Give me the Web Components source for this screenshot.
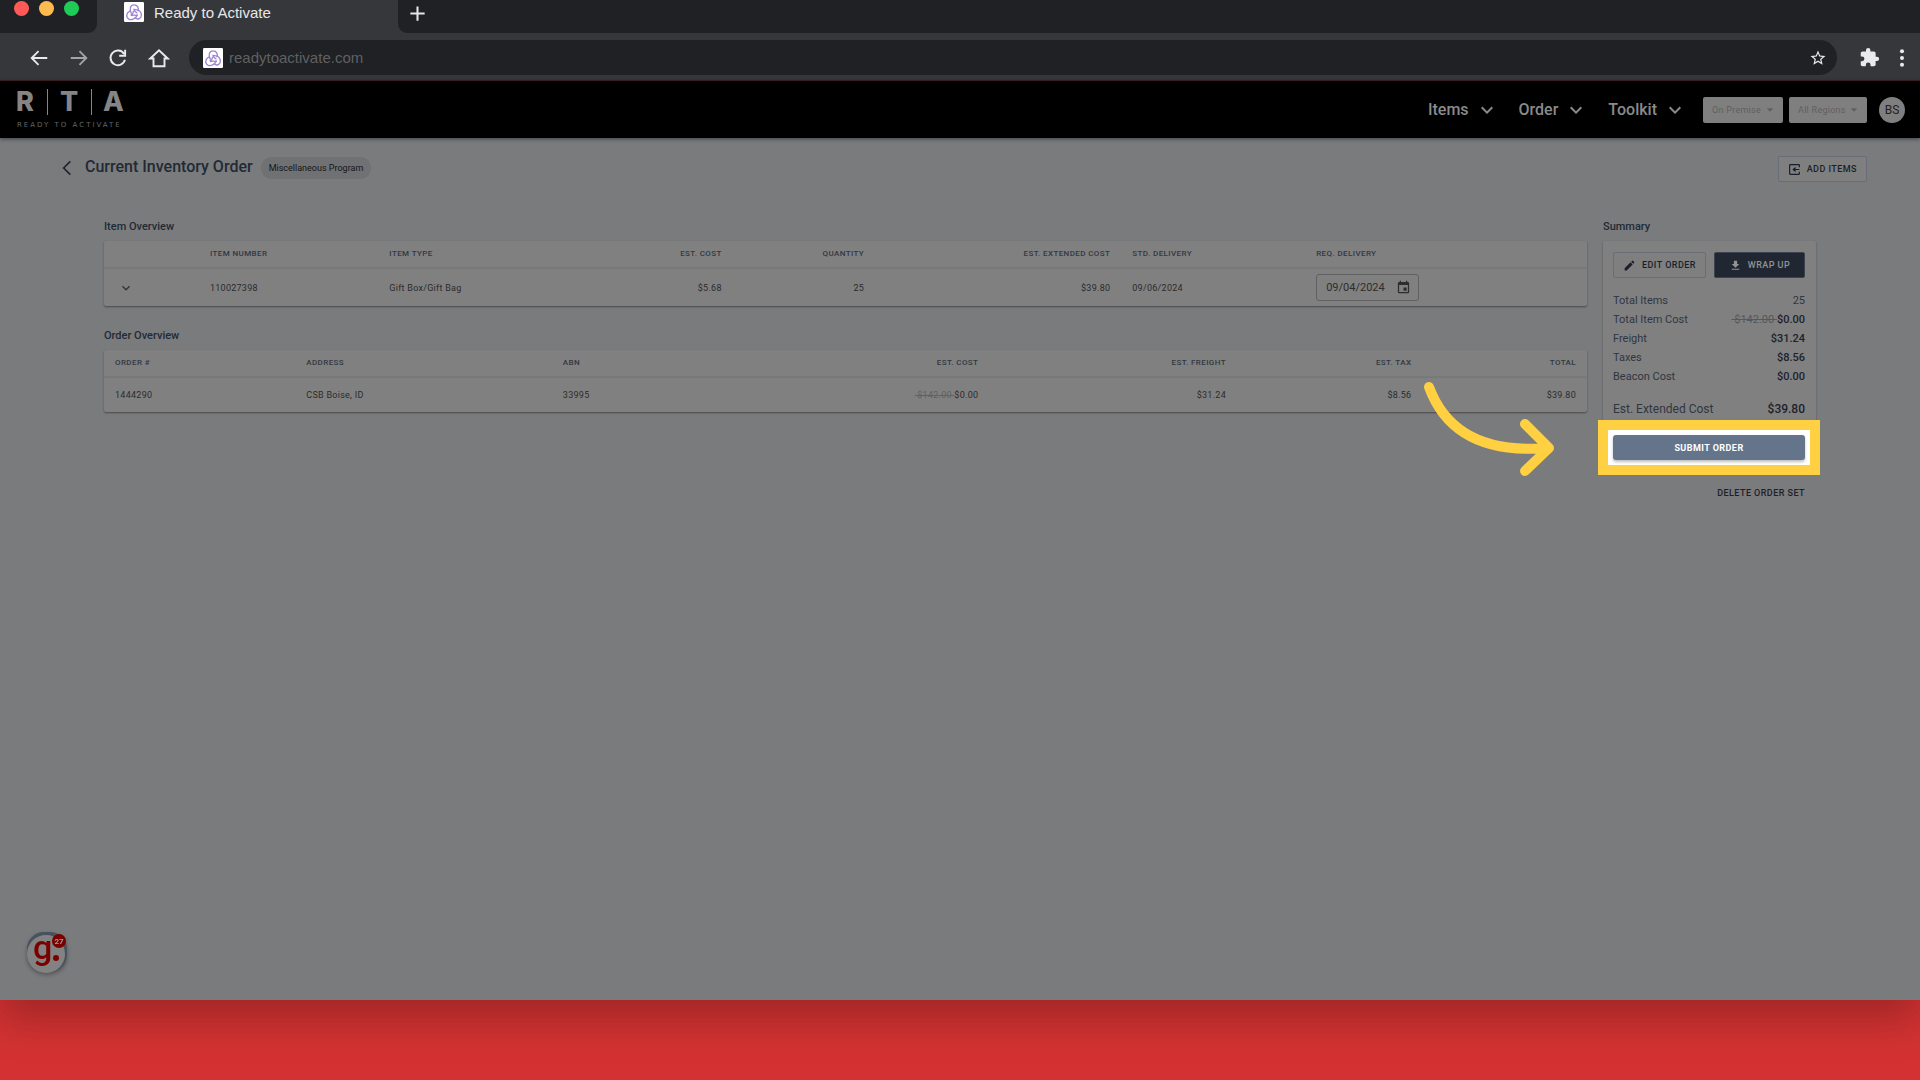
<!DOCTYPE html>
<html lang="en">
<head>
<meta charset="utf-8">
<title>Ready to Activate</title>
<style>
  body { margin: 0; min-height: 100vh; background: #d43232; font-family: Roboto, "Liberation Sans", sans-serif; }
</style>
</head>
<body>
<app-window>
  <tab-strip slot="chrome" label="Ready to Activate"></tab-strip>
  <address-bar slot="chrome" url="readytoactivate.com"></address-bar>
  <site-header>
    <nav-item>Items</nav-item>
    <nav-item>Order</nav-item>
    <nav-item>Toolkit</nav-item>
    <filter-select slot="filters" label="Premise" value="On Premise"></filter-select>
    <filter-select slot="filters" label="Region" value="All Regions"></filter-select>
  </site-header>
  <page-title badge="Miscellaneous Program">Current Inventory Order</page-title>
  <order-layout>
    <data-table source="items"></data-table>
    <data-table source="orders"></data-table>
    <order-summary slot="aside"></order-summary>
  </order-layout>
  <help-bubble></help-bubble>
</app-window>

<script>
const ICONS = {
  back: '<path d="M21 12H4M11.500 4.500 4 12l7.500 7.500" fill="none" stroke="currentColor" stroke-width="2"/>',
  forward: '<path d="M3 12h17M12.500 4.500 20 12l-7.500 7.500" fill="none" stroke="currentColor" stroke-width="2"/>',
  reload: '<path d="M17.500 7.500A8 8 0 1 0 18.500 14M18.700 3v6.500h-6.500" fill="none" stroke="currentColor" stroke-width="2.100"/>',
  home: '<path d="M2.500 12.500 12 3.500l9.500 9h-3.500v8.500h-12v-8.500z" fill="none" stroke="currentColor" stroke-width="2.100"/>',
  star: '<path d="M22 9.240l-7.190-.62L12 2 9.190 8.630 2 9.240l5.460 4.730L5.820 21 12 17.270 18.180 21l-1.630-7.030L22 9.240zM12 15.400l-3.760 2.270 1-4.280-3.320-2.880 4.380-.38L12 6.100l1.710 4.040 4.380.38-3.320 2.880 1 4.280L12 15.400z"/>',
  puzzle: '<path d="M20.500 11H19V7c0-1.100-.9-2-2-2h-4V3.500a2.500 2.500 0 0 0-5 0V5H4c-1.100 0-2 .9-2 2v3.800h1.500a2.700 2.700 0 0 1 0 5.400H2V20c0 1.100.9 2 2 2h3.800v-1.500a2.700 2.700 0 0 1 5.400 0V22H17c1.100 0 2-.9 2-2v-4h1.500a2.500 2.500 0 0 0 0-5z"/>',
  dots: '<circle cx="12" cy="3" r="2.700"/><circle cx="12" cy="12" r="2.700"/><circle cx="12" cy="21" r="2.700"/>',
  plus: '<path d="M12 3v18M3 12h18" stroke="currentColor" stroke-width="2.600"/>',
  down: '<path d="M7.410 8.590 12 13.170l4.590-4.580L18 10l-6 6-6-6z"/>',
  caret: '<path d="M4 8l8 8 8-8z"/>',
  left: '<path d="M17 2 7 12l10 10" fill="none" stroke="currentColor" stroke-width="2.600"/>',
  add: '<path d="M21 8V4a1 1 0 0 0-1-1H4a1 1 0 0 0-1 1v16a1 1 0 0 0 1 1h16a1 1 0 0 0 1-1v-4" fill="none" stroke="currentColor" stroke-width="2.200"/><path d="M21 11h-7V7l-6 5 6 5v-4h7z"/>',
  pencil: '<path d="M3 17.250V21h3.750L17.810 9.940l-3.750-3.750L3 17.250zM20.710 7.040a1 1 0 0 0 0-1.410l-2.340-2.340a1 1 0 0 0-1.410 0l-1.830 1.830 3.750 3.750 1.830-1.830z"/>',
  download: '<path d="M19 9h-4V3H9v6H5l7 7 7-7zM5 18v2h14v-2H5z"/>',
  calendar: '<path d="M17 12h-5v5h5v-5zM16 1v2H8V1H6v2H5a2 2 0 0 0-2 2v14a2 2 0 0 0 2 2h14a2 2 0 0 0 2-2V5a2 2 0 0 0-2-2h-1V1h-2zm3 18H5V8h14v11z"/>',
  redux: '<rect width="24" height="24" rx="1.500" fill="#fff"/><g fill="none" stroke="#a084d4" stroke-width="1.600" stroke-linecap="round"><path d="M8.800 13.500C6 9 7.500 3.500 12 3.500s6 4 4.700 7"/><path d="M12.500 9.200c5-.8 8.800 3 8.300 7.300-.4 3.800-4.800 5-7.600 2.500"/><path d="M15.800 15.500c-1.500 4.500-6.300 6.800-10 5-3.800-2-3-7.500.7-9.300"/><path d="M12 8.500c.5 2 1.500 3.500 3.500 4.500M9 16.200c2-.6 4.500-.6 6.800 0M8.500 15.500c1.800-1 2.800-2.800 3-4.500"/></g>'
};

const s = (text, strike) => strike ? `<s>&nbsp;${strike}&nbsp;</s>${text}` : text;
const DATA = {
  items: {
    title: 'Item Overview',
    cols: [
      { head: '', width: 6.4, cell: '<button class="exp" aria-label="Expand row"><ui-icon name="down" size="16"></ui-icon></button>' },
      { head: 'ITEM NUMBER', width: 12.1, cell: '110027398' },
      { head: 'ITEM TYPE', width: 14.3, cell: 'Gift Box/Gift Bag' },
      { head: 'EST. COST', width: 9.6, num: 1, cell: '$5.68' },
      { head: 'QUANTITY', width: 9.6, num: 1, cell: '25' },
      { head: 'EST. EXTENDED COST', width: 16.6, num: 1, cell: '$39.80' },
      { head: 'STD. DELIVERY', width: 12.4, cell: '09/06/2024' },
      { head: 'REQ. DELIVERY', width: 19, cell: '<date-field value="09/04/2024"></date-field>' }
    ]
  },
  orders: {
    title: 'Order Overview',
    cols: [
      { head: 'ORDER #', width: 12.9, cell: '1444290' },
      { head: 'ADDRESS', width: 17.3, cell: 'CSB Boise, ID' },
      { head: 'ABN', width: 12.3, cell: '33995' },
      { head: 'EST. COST', width: 17.2, num: 1, cell: s('$0.00', '$142.00') },
      { head: 'EST. FREIGHT', width: 16.7, num: 1, cell: '$31.24' },
      { head: 'EST. TAX', width: 12.5, num: 1, cell: '$8.56' },
      { head: 'TOTAL', width: 11.1, num: 1, cell: '$39.80' }
    ]
  }
};

const base = '*,:host{box-sizing:border-box}button,input,select{font:inherit;color:inherit;margin:0}button{border:0;background:none;padding:0;display:flex;align-items:center;justify-content:center}';
function define(name, render) {
  customElements.define(name, class extends HTMLElement {
    connectedCallback() {
      if (this.shadowRoot) return;
      const t = document.createElement('template');
      t.innerHTML = render(this);
      this.attachShadow({ mode: 'open' }).append(t.content.cloneNode(true));
    }
  });
}

define('ui-icon', el => `<style>:host{display:block;flex:none;width:${el.getAttribute('size')}px;height:${el.getAttribute('size')}px}svg{display:block;width:100%;height:100%}</style>
<svg viewBox="0 0 24 24" fill="currentColor" aria-hidden="true">${ICONS[el.getAttribute('name')]}</svg>`);

define('app-window', () => `<style>${base}
:host{display:flex;flex-direction:column;position:relative;min-height:calc(100vh - 80px);background:#7a7b7d;box-shadow:0 18px 40px rgba(0,0,0,.25)}
</style><slot name="chrome"></slot><slot></slot>`);

define('tab-strip', el => `<style>${base}
:host{display:flex;height:33px;background:#36373b;font:15px/20px "Liberation Sans",sans-serif;color:#e6e7e9}
.lights{width:97px;background:#202124;border-radius:0 0 9px 0;display:flex;gap:10px;padding:1px 0 0 14px}
.lights i{width:15px;height:15px;border-radius:50%}
.tab{width:301px;display:flex;align-items:flex-start;gap:10px;padding:2px 0 0 27px}
.tab span{padding-top:1px}
.rest{flex:1;background:#202124;border-radius:0 0 0 9px;padding:4px 0 0 10px}
</style>
<div class="lights"><i style="background:#ff5a57"></i><i style="background:#ffbb4e"></i><i style="background:#1fcb57"></i></div>
<div class="tab"><ui-icon name="redux" size="20"></ui-icon><span>${el.getAttribute('label')}</span></div>
<div class="rest"><button aria-label="New tab"><ui-icon name="plus" size="19"></ui-icon></button></div>`);

define('address-bar', el => `<style>${base}
:host{display:flex;align-items:center;height:48px;background:#36373b;border-bottom:1px solid #3f2226;padding:2px 9px 0 28px;color:#e8eaed;font:15px/20px "Liberation Sans",sans-serif}
.nav{display:flex;gap:18px;margin-right:19px}
.dim{color:#a3a4a7}
.omni{flex:1;display:flex;align-items:center;gap:6px;height:35px;border-radius:18px;background:#202124;padding:0 10px 0 14px}
input{flex:1;min-width:0;border:0;padding:0;background:none;color:#5f6063;outline:0}
.ext{display:flex;align-items:center;gap:13px;margin-left:22px}
</style>
<div class="nav"><button aria-label="Back"><ui-icon name="back" size="22"></ui-icon></button><button class="dim" aria-label="Forward"><ui-icon name="forward" size="22"></ui-icon></button><button aria-label="Reload"><ui-icon name="reload" size="22"></ui-icon></button><button aria-label="Home"><ui-icon name="home" size="22"></ui-icon></button></div>
<div class="omni"><ui-icon name="redux" size="20"></ui-icon><input aria-label="Address" value="${el.getAttribute('url')}"><button aria-label="Bookmark"><ui-icon name="star" size="18"></ui-icon></button></div>
<div class="ext"><button aria-label="Extensions"><ui-icon name="puzzle" size="21"></ui-icon></button><button aria-label="Menu"><ui-icon name="dots" size="18"></ui-icon></button></div>`);

define('brand-logo', () => `<style>:host{display:block;color:#858585}
svg{display:block;overflow:visible}</style>
<svg width="108" height="40" viewBox="0 0 108 40" fill="currentColor" font-family="Inter,sans-serif" role="img" aria-label="RTA Ready to Activate">
<g font-size="27" font-weight="800"><text x="-1" y="21">R</text><text x="43" y="21">T</text><text x="86" y="21">A</text></g>
<path d="M30 -1h1v26h-1zM74 -1h1v26h-1z"/><text x="0" y="37" font-family="DejaVu Sans" font-size="7" letter-spacing="2" fill="#666">READY TO ACTIVATE</text></svg>`);

define('nav-item', () => `<style>${base}:host{display:block}
button{gap:6px;font:500 16px/24px Roboto,sans-serif;color:#8a8a8a}</style>
<button aria-haspopup="true"><slot></slot><ui-icon name="down" size="24"></ui-icon></button>`);

define('filter-select', el => `<style>${base}
:host{display:block}
label{display:flex;align-items:center;height:26px;padding:0 8px 0 9px;gap:3px;background:#7f7f7f;border-radius:2px;color:#606060;font-size:9px;letter-spacing:.03em}
select{appearance:none;border:0;background:none;padding:0;outline:0;letter-spacing:inherit}
</style><label><select aria-label="${el.getAttribute('label')}"><option>${el.getAttribute('value')}</option></select><ui-icon name="caret" size="10"></ui-icon></label>`);

define('site-header', () => `<style>${base}
:host{display:flex;align-items:center;justify-content:space-between;height:57px;flex:none;background:#000;padding:0 15px 0 17px;box-shadow:0 1px 4px rgba(0,0,0,.5);z-index:1}
.right{display:flex;align-items:center}
nav{display:flex;gap:20px;margin-right:16px}
.filters{display:flex;gap:6px;margin-right:12px}
.avatar{width:26px;height:26px;border-radius:50%;background:#7f7f7f;color:#222;font-size:12px}
</style><brand-logo></brand-logo><div class="right"><nav><slot></slot></nav><div class="filters"><slot name="filters"></slot></div><button class="avatar" aria-label="Account BS">BS</button></div>`);

define('ui-button', el => `<style>${base}
:host{display:flex}
button{flex:1;height:26px;gap:6px;padding:0 9px;border:1px solid #686d77;border-radius:2px;font:500 9px/14px Roboto,sans-serif;letter-spacing:.05em;color:#1a1f2b;white-space:nowrap;background:#7f7f7f}
:host([kind=solid]) button{background:#202733;border-color:#3b4250;color:#929395}
:host([kind=submit]) button{background:#64748b;border:0;height:25px;color:#fff;font-weight:700;border-radius:3px;box-shadow:0 2px 3px rgba(0,0,0,.25)}
:host([kind=text]) button{background:none;border:0;padding:0;color:#1d2029}
</style><button>${el.hasAttribute('icon') ? `<ui-icon name="${el.getAttribute('icon')}" size="13"></ui-icon>` : ''}<span><slot></slot></span></button>`);

define('page-title', el => `<style>${base}
:host{display:flex;align-items:center;padding:18px 53px 0 59px}
h1{margin:0 8px 4px 10px;font:500 16px/20px Roboto,sans-serif;color:#222a35}
.back{color:#20262f;margin-bottom:3px}
.badge{height:22px;padding:0 8px;border-radius:11px;background:#707173;color:#161617;font-size:9px;line-height:22px;margin-bottom:2px}
ui-button{margin-left:auto}
</style><button class="back" aria-label="Back to orders"><ui-icon name="left" size="16"></ui-icon></button><h1><slot></slot></h1><span class="badge">${el.getAttribute('badge')}</span><ui-button icon="add">ADD ITEMS</ui-button>`);

define('order-layout', () => `<style>${base}
:host{display:flex;gap:16px;padding:38px 104px 0}
.tables{flex:1;min-width:0;display:flex;flex-direction:column;gap:23px}
.aside{width:213px}
</style><div class="tables"><slot></slot></div><div class="aside"><slot name="aside"></slot></div>`);

define('date-field', el => `<style>${base}
:host{display:flex;align-items:center;width:103px;height:27px;border:1px solid #606060;border-radius:3px;padding:0 7px 0 9px;color:#2d2d2d;font-size:11px;letter-spacing:0}
input{flex:1;min-width:0;width:0;border:0;padding:0;background:none;outline:0}
</style><input aria-label="Requested delivery" value="${el.getAttribute('value')}"><button aria-label="Choose date"><ui-icon name="calendar" size="15"></ui-icon></button>`);

const heading = 'h2{margin:0 0 7px;font:500 11px/14px Roboto,sans-serif;color:#222a35}';

define('data-table', el => {
  const spec = DATA[el.getAttribute('source')];
  return `<style>${base}${heading}
:host{display:block}
table{width:100%;table-layout:fixed;border-spacing:0;background:#808080;border-radius:2px;box-shadow:0 1px 2px rgba(0,0,0,.4)}
th,td{padding:0 11px;text-align:left;white-space:nowrap}
th{height:28px;border-bottom:2px solid #78797a;font:500 8px/12px Roboto,sans-serif;letter-spacing:.05em;color:#303843}
td{height:34px;padding:5px 11px;font-size:9px;line-height:14px;letter-spacing:.03em;color:#2b2b2d}
.n{text-align:right}s{color:#606163}
.exp{margin-left:3px;color:#2d3440}
</style><h2>${spec.title}</h2><table>
<colgroup>${spec.cols.map(c => `<col style="width:${c.width}%">`).join('')}</colgroup>
<thead><tr>${spec.cols.map(c => `<th scope="col"${c.num ? ' class="n"' : ''}>${c.head}</th>`).join('')}</tr></thead>
<tbody><tr>${spec.cols.map(c => `<td${c.num ? ' class="n"' : ''}>${c.cell}</td>`).join('')}</tr></tbody></table>`;
});

define('guide-arrow', () => `<style>:host{position:absolute;right:calc(100% + 54px);top:-60px;pointer-events:none}svg{display:block}</style>
<svg width="140" height="110" viewBox="0 0 140 110" fill="none" stroke="#ffd042" stroke-width="10" stroke-linecap="round" stroke-linejoin="round" aria-hidden="true"><path d="M10 12C24 50 56 79 128 73M106 49 130 73 106 96"/></svg>`);

define('order-summary', () => `<style>${base}${heading}
:host{display:block}
.card{background:#808080;border-radius:2px;box-shadow:0 1px 2px rgba(0,0,0,.4);padding:11px 11px 10px 10px}
.row{display:flex;gap:8px}
.row>*{flex:1}
dl{margin:13px 0 0;font-size:11px;line-height:19px;color:#303640}
dl div{display:flex;justify-content:space-between}
dd{margin:0;font-weight:500;color:#1d222b}
dd.q{font-weight:400;color:#303640}
s{font-weight:400;color:#55585d}
.total{margin-top:13px;font-size:12px;line-height:20px}
.spot{position:relative;margin-top:16px;box-shadow:0 0 0 5px #fff,0 0 0 15px #ffd042;background:#fff}
.end{display:flex;justify-content:flex-end;padding:10px 11px 0 0}
</style><h2>Summary</h2>
<div class="card"><div class="row"><ui-button icon="pencil">EDIT ORDER</ui-button><ui-button kind="solid" icon="download">WRAP UP</ui-button></div>
<dl><div><dt>Total Items</dt><dd class="q">25</dd></div>
<div><dt>Total Item Cost</dt><dd>${s('$0.00', '$142.00')}</dd></div>
<div><dt>Freight</dt><dd>$31.24</dd></div>
<div><dt>Taxes</dt><dd>$8.56</dd></div>
<div><dt>Beacon Cost</dt><dd>$0.00</dd></div>
<div class="total"><dt>Est. Extended Cost</dt><dd>$39.80</dd></div></dl>
<div class="spot"><ui-button kind="submit">SUBMIT ORDER</ui-button><guide-arrow></guide-arrow></div></div>
<div class="end"><ui-button kind="text">DELETE ORDER SET</ui-button></div>`);

define('help-bubble', () => `<style>${base}
:host{position:absolute;left:26px;bottom:24px}
button{width:42px;height:44px}svg{display:block;overflow:visible;filter:drop-shadow(0 2px 2px rgba(0,0,0,.3))}
</style><button aria-label="Help, 27 new"><svg width="42" height="44" viewBox="0 0 42 44">
<rect x="1" y="0" width="40" height="40" rx="17" fill="#47525f"/><circle cx="20" cy="22" r="19" fill="#828282"/>
<text x="7" y="27" font-family="Roboto,sans-serif" font-weight="500" font-size="34" fill="#7a0000">g</text><circle cx="30" cy="26" r="3" fill="#7a0000"/>
<circle cx="33" cy="9" r="7" fill="#7a0000"/><text x="33" y="12" text-anchor="middle" font-family="Roboto,sans-serif" font-weight="700" font-size="8" fill="#999">27</text></svg></button>`);
</script>
</body>
</html>
